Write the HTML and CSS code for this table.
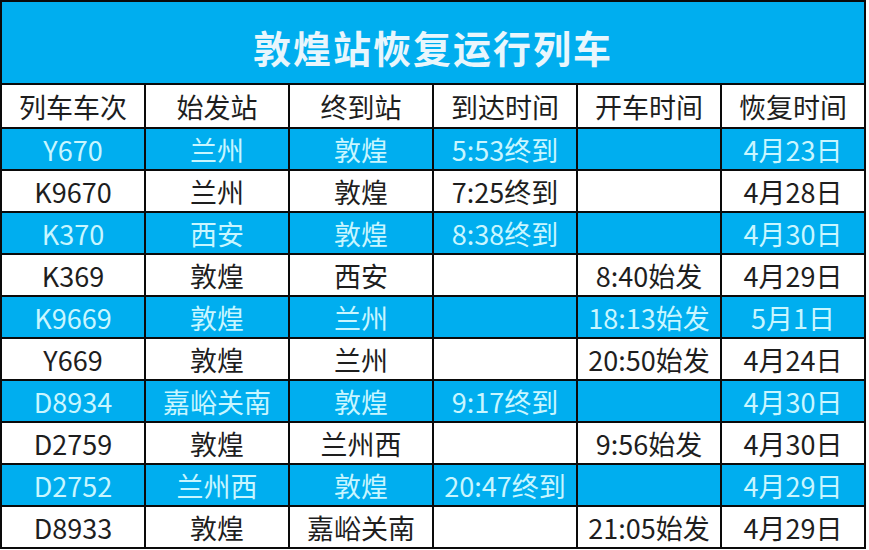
FILE: index.html
```html
<!DOCTYPE html>
<html lang="zh-CN">
<head>
<meta charset="utf-8">
<title>敦煌站恢复运行列车</title>
<link rel="stylesheet" href="styles.css">
</head>
<body>
<table class="sched">
  <tr><th class="title" colspan="6">敦煌站恢复运行列车</th></tr>
  <tr class="head"><th>列车车次</th><th>始发站</th><th>终到站</th><th>到达时间</th><th>开车时间</th><th>恢复时间</th></tr>
  <tr class="blue"><td>Y670</td><td>兰州</td><td>敦煌</td><td>5:53终到</td><td></td><td>4月23日</td></tr>
  <tr class="white"><td>K9670</td><td>兰州</td><td>敦煌</td><td>7:25终到</td><td></td><td>4月28日</td></tr>
  <tr class="blue"><td>K370</td><td>西安</td><td>敦煌</td><td>8:38终到</td><td></td><td>4月30日</td></tr>
  <tr class="white"><td>K369</td><td>敦煌</td><td>西安</td><td></td><td>8:40始发</td><td>4月29日</td></tr>
  <tr class="blue"><td>K9669</td><td>敦煌</td><td>兰州</td><td></td><td>18:13始发</td><td>5月1日</td></tr>
  <tr class="white"><td>Y669</td><td>敦煌</td><td>兰州</td><td></td><td>20:50始发</td><td>4月24日</td></tr>
  <tr class="blue"><td>D8934</td><td>嘉峪关南</td><td>敦煌</td><td>9:17终到</td><td></td><td>4月30日</td></tr>
  <tr class="white"><td>D2759</td><td>敦煌</td><td>兰州西</td><td></td><td>9:56始发</td><td>4月30日</td></tr>
  <tr class="blue"><td>D2752</td><td>兰州西</td><td>敦煌</td><td>20:47终到</td><td></td><td>4月29日</td></tr>
  <tr class="white"><td>D8933</td><td>敦煌</td><td>嘉峪关南</td><td></td><td>21:05始发</td><td>4月29日</td></tr>
</table>
</body>
</html>
```

FILE: styles.css
```css
html, body {
  margin: 0;
  padding: 0;
  background: #ffffff;
}
.sched {
  border-collapse: separate;
  border-spacing: 2px;
  background: #0a0a0a;
  width: 866px;
  table-layout: fixed;
  font-family: "Noto Sans CJK SC", "Noto Sans", sans-serif;
}
.sched th, .sched td {
  padding: 0;
  text-align: center;
  vertical-align: middle;
  font-size: 27px;
  font-weight: 400;
  line-height: 1;
  white-space: nowrap;
  overflow: hidden;
}
.sched .title {
  height: 81px;
  background: #00aeef;
  color: #e9f6fc;
  font-size: 38px;
  font-weight: 700;
  letter-spacing: 2px;
  padding-top: 8px;
  box-sizing: border-box;
}
.head th {
  height: 42px;
  background: #ffffff;
  color: #1e1e1e;
}
.blue td, .white td {
  height: 40px;
}
.blue td {
  background: #00aeef;
  color: #c8f6ff;
}
.white td {
  background: #ffffff;
  color: #1e1e1e;
}
```
